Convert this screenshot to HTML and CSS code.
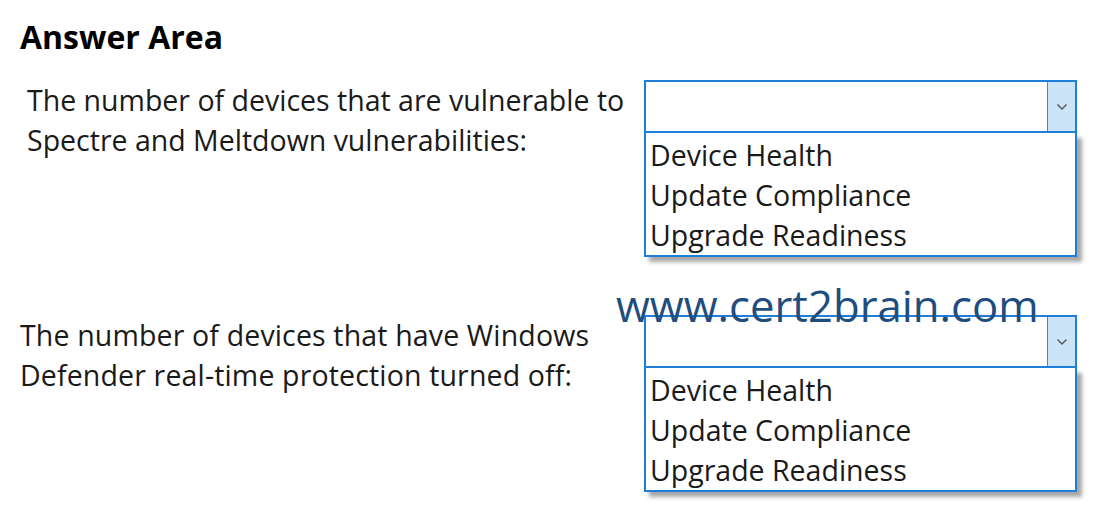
FILE: index.html
```html
<!DOCTYPE html>
<html lang="en">
<head>
<meta charset="utf-8">
<title>Answer Area</title>
<link rel="stylesheet" href="styles.css">
</head>
<body>
<main class="page">
  <h1 class="title">Answer Area</h1>
  <section class="rows">
    <div class="row">
      <p class="label label-indent">The number of devices that are vulnerable to<br>Spectre and Meltdown vulnerabilities:</p>
      <div class="dropdown">
        <div class="select">
          <span class="btn"><svg width="12" height="8" viewBox="0 0 12 8"><path d="M1.5 1.5 L6 6 L10.5 1.5" fill="none" stroke="#5a5a5a" stroke-width="1.5"/></svg></span>
        </div>
        <ul class="list">
          <li>Device Health</li>
          <li>Update Compliance</li>
          <li>Upgrade Readiness</li>
        </ul>
      </div>
    </div>
    <div class="row">
      <p class="label">The number of devices that have Windows<br>Defender real-time protection turned off:</p>
      <div class="dropdown">
        <div class="select">
          <span class="btn"><svg width="12" height="8" viewBox="0 0 12 8"><path d="M1.5 1.5 L6 6 L10.5 1.5" fill="none" stroke="#5a5a5a" stroke-width="1.5"/></svg></span>
        </div>
        <ul class="list">
          <li>Device Health</li>
          <li>Update Compliance</li>
          <li>Upgrade Readiness</li>
        </ul>
      </div>
    </div>
  </section>
  <div class="watermark">www.cert2brain.com</div>
</main>
</body>
</html>
```
FILE: styles.css
```css
* { box-sizing: border-box; }
html, body { margin: 0; padding: 0; background: #fff; }
body { font-family: "Open Sans", "Liberation Sans", sans-serif; color: #1a1a1a; }
.page { position: relative; width: 1093px; height: 510px; padding: 17px 0 0 20px; }
.title { margin: 0; font-size: 32px; font-weight: 700; line-height: 40px; color: #000; }
.rows { display: flex; flex-direction: column; gap: 58px; margin-top: 23px; }
.row { display: grid; grid-template-columns: 624px 433px; align-items: start; }
.label { margin: 0; font-size: 28.5px; line-height: 40px; }
.label-indent { padding-left: 7px; }
.label:not(.label-indent) { letter-spacing: 0.15px; }
.dropdown { width: 433px; }
.select { height: 53px; border: 2px solid #1f7fd8; display: flex; justify-content: flex-end; background: #fff; }
.btn { width: 28px; height: 100%; background: #cce4f7; border-left: 1px solid #4a86bd; display: flex; align-items: center; justify-content: center; }
.list { list-style: none; margin: 0; padding: 2px 0 0 4px; border: 2px solid #1f7fd8; border-top: none; background: #fff; box-shadow: 5px 5px 4px rgba(0,0,0,0.35); font-size: 28.5px; line-height: 40px; height: 124px; }
.list li { white-space: nowrap; }
.watermark { position: absolute; left: 616px; top: 284px; font-size: 43.7px; line-height: 1; color: #1f4e7e; white-space: nowrap; }
```
